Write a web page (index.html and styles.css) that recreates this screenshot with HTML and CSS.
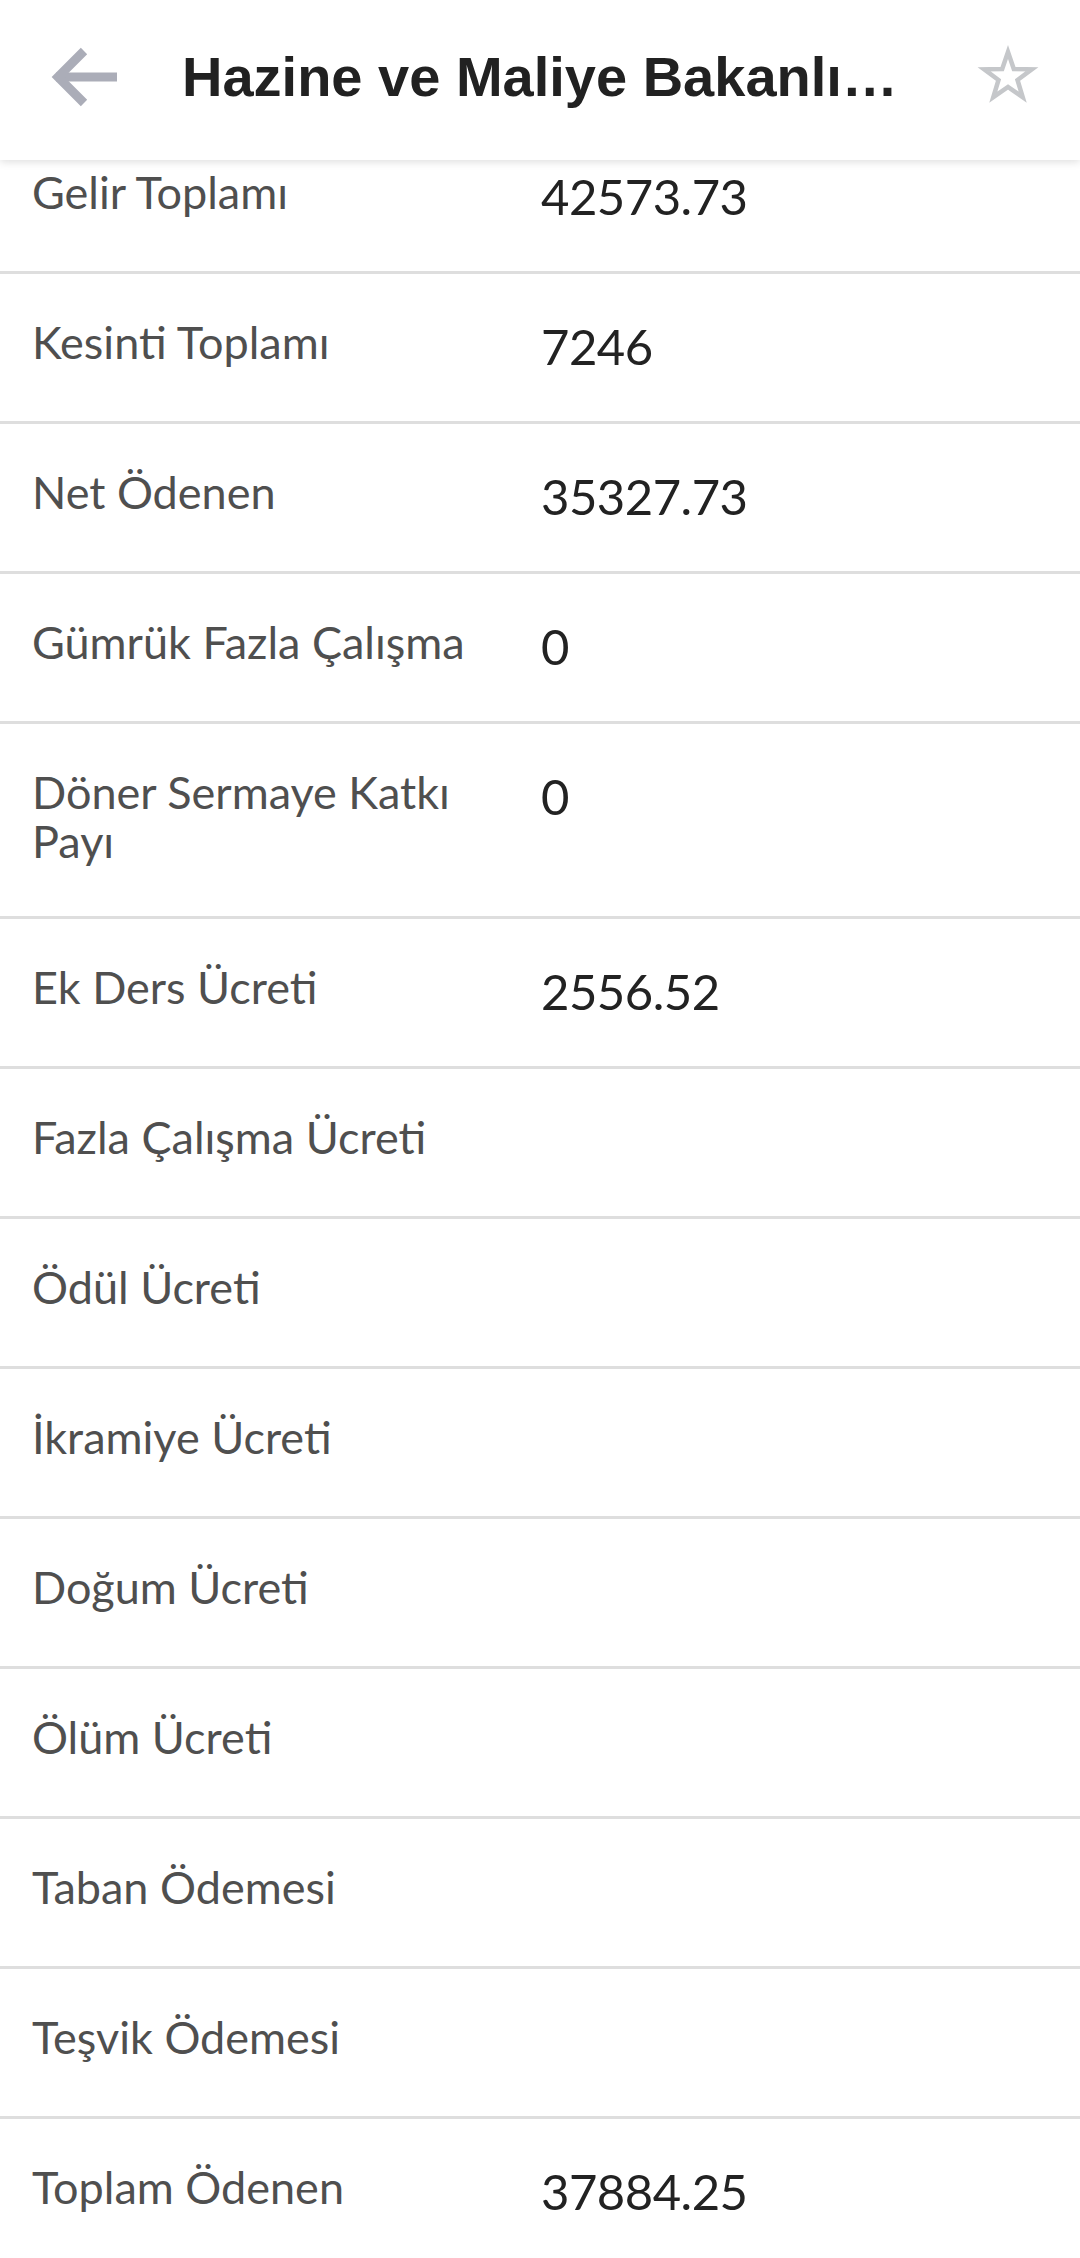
FILE: index.html
```html
<!DOCTYPE html>
<html lang="tr">
<head>
    <meta charset="UTF-8">
    <meta name="viewport" content="width=device-width, initial-scale=1.0">
    <title>Hazine ve Maliye Bakanlığı</title>
    <link rel="stylesheet" href="styles.css">
</head>
<body>
    <div class="topbar">
        <svg class="back" width="80" height="80" viewBox="0 0 80 80">
            <path d="M73 40 H12" />
            <polyline points="40,14 14,40 40,66" />
        </svg>
        <div class="title">Hazine ve Maliye Bakanlığı Maaş Detayı</div>
        <svg class="star" width="70" height="70" viewBox="-35 -35 70 70">
            <polygon points="0,-25 5.8,-8.0 23.8,-7.7 9.5,3.0 14.7,20.2 0,9.9 -14.7,20.2 -9.5,3.0 -23.8,-7.7 -5.8,-8.0" />
        </svg>
    </div>

    <div class="list">
        <div class="row"><div class="label">Gelir Toplamı</div><div class="value">42573.73</div></div>
        <div class="row"><div class="label">Kesinti Toplamı</div><div class="value">7246</div></div>
        <div class="row"><div class="label">Net Ödenen</div><div class="value">35327.73</div></div>
        <div class="row"><div class="label">Gümrük Fazla Çalışma</div><div class="value">0</div></div>
        <div class="row"><div class="label">Döner Sermaye Katkı Payı</div><div class="value">0</div></div>
        <div class="row"><div class="label">Ek Ders Ücreti</div><div class="value">2556.52</div></div>
        <div class="row"><div class="label">Fazla Çalışma Ücreti</div><div class="value"></div></div>
        <div class="row"><div class="label">Ödül Ücreti</div><div class="value"></div></div>
        <div class="row"><div class="label">İkramiye Ücreti</div><div class="value"></div></div>
        <div class="row"><div class="label">Doğum Ücreti</div><div class="value"></div></div>
        <div class="row"><div class="label">Ölüm Ücreti</div><div class="value"></div></div>
        <div class="row"><div class="label">Taban Ödemesi</div><div class="value"></div></div>
        <div class="row"><div class="label">Teşvik Ödemesi</div><div class="value"></div></div>
        <div class="row"><div class="label">Toplam Ödenen</div><div class="value">37884.25</div></div>
    </div>
</body>
</html>
```

FILE: styles.css
```css
body {
    margin: 0;
    background: #fff;
    font-family: Lato, "Noto Sans", sans-serif;
    overflow: hidden;
}

/* ust bar, liste kaydirilmis durumda onun altinda kaliyor */
.topbar {
    position: fixed;
    top: 0;
    left: 0;
    right: 0;
    z-index: 2;
    height: 153px;
    padding-bottom: 7px;
    background: #fff;
    display: flex;
    align-items: center;
    box-shadow: 0 2px 8px rgba(0,0,0,0.13);
}
.back {
    margin-left: 44px;
    flex: none;
}
.back path,
.back polyline {
    fill: none;
    stroke: #abadb8;
    stroke-width: 9;
    stroke-linejoin: miter;
}
.title {
    margin-left: 58px;
    width: 725px;
    font-family: "Liberation Sans", Arial, sans-serif;
    font-weight: bold;
    font-size: 56px;
    color: #212121;
    white-space: nowrap;
    overflow: hidden;
    text-overflow: ellipsis;
}
.star {
    margin-left: auto;
    margin-right: 37px;
    flex: none;
}
.star polygon {
    fill: none;
    stroke: #c5c7ca;
    stroke-width: 4.5;
}

.list {
    padding-top: 124px;
}
.row {
    display: flex;
    align-items: flex-start;
    padding: 44px 32px 50px;
    border-bottom: 3px solid #dedede;
}
.label {
    width: 480px;
    flex: none;
    font-size: 45px;
    line-height: 49px;
    color: #4f4f4f;
}
.value {
    margin-left: 29px;
    padding-top: 4px;
    font-size: 49px;
    line-height: 49px;
    min-height: 49px;
    letter-spacing: -0.5px;
    color: #222;
}
```
